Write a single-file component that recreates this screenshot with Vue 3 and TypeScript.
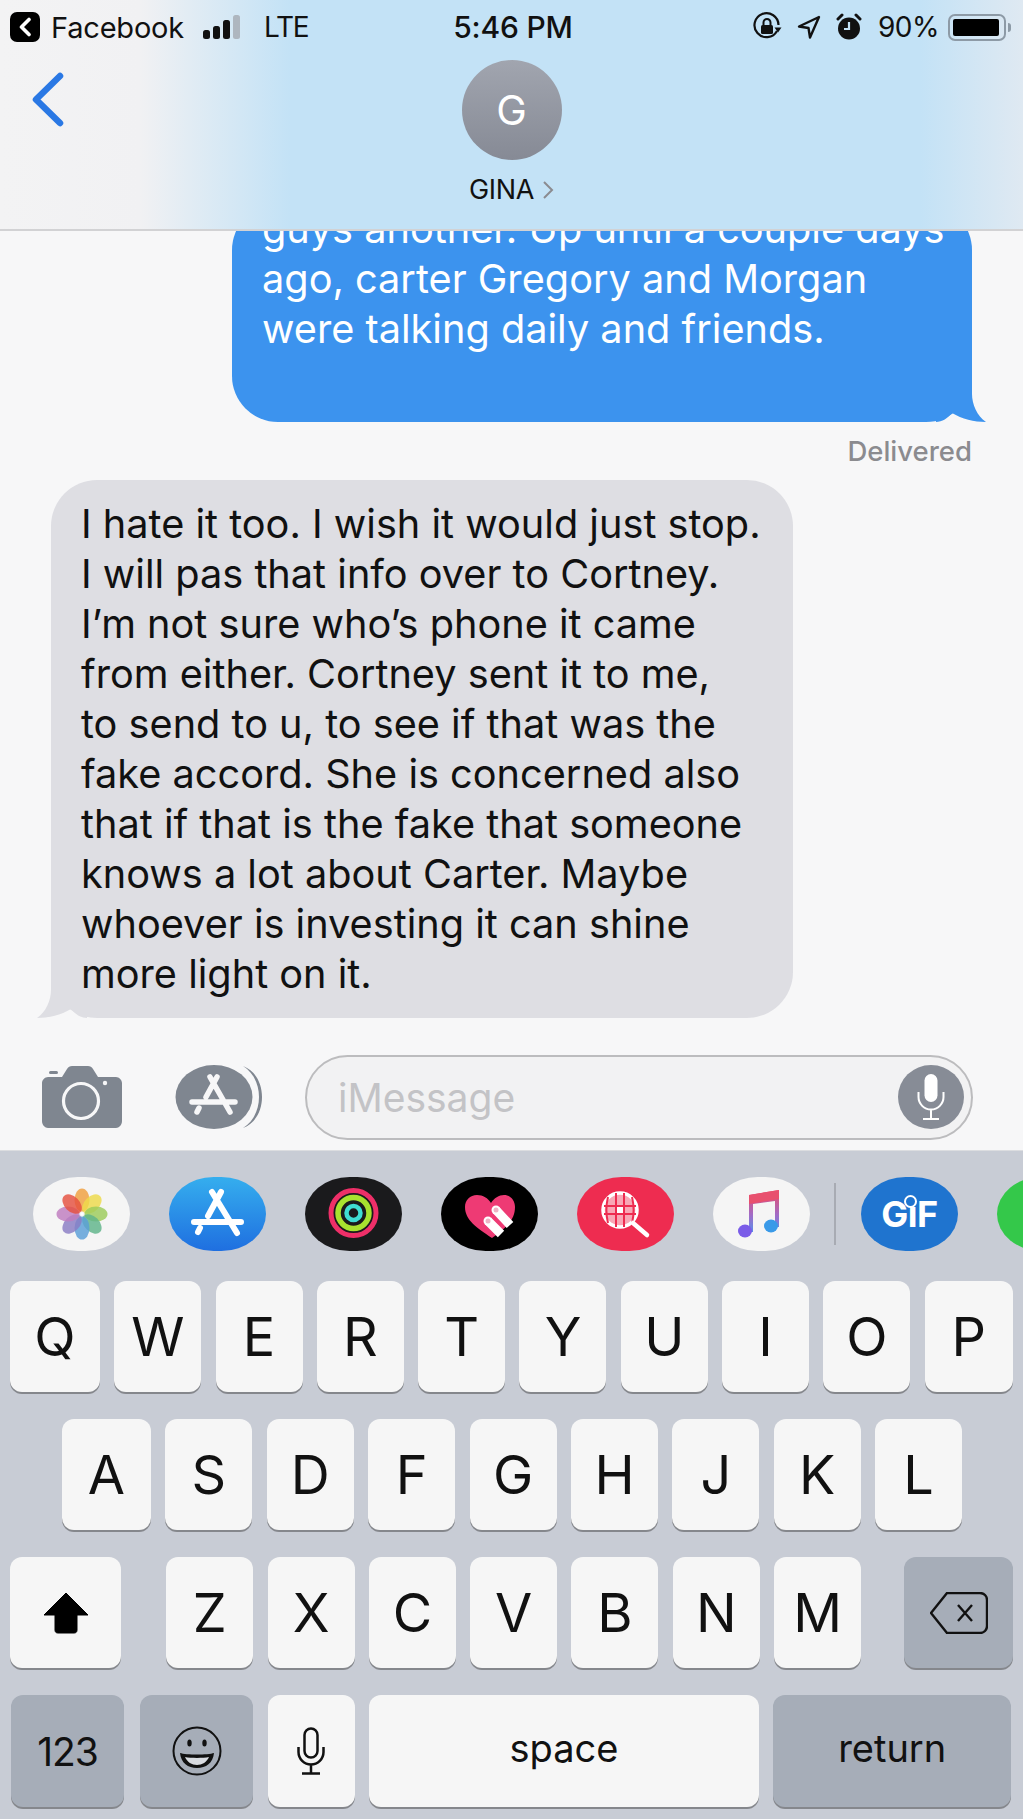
<template>
  <div class="phone">
    <header class="top">
      <div class="status">
        <div class="status-left">
          <span class="back-badge">
            <svg width="14" height="20" viewBox="0 0 14 20"><path d="M11 2.500 3.500 10l7.500 7.500" fill="none" stroke="#fff" stroke-width="3.600" stroke-linecap="round" stroke-linejoin="round" /></svg>
          </span>
          <span class="app-name">Facebook</span>
          <span class="signal"><i class="b1"></i><i class="b2"></i><i class="b3"></i><i class="b4"></i></span>
          <span class="lte">LTE</span>
        </div>
        <div class="clock">5:46 PM</div>
        <div class="status-right">
          <svg width="30" height="30" viewBox="0 0 30 30">
            <path d="M25 19a12 12 0 1 1 1.500-6" fill="none" stroke="#111" stroke-width="2.200" />
            <path d="M22.500 15.500h7l-3.500 5z" fill="#111" />
            <rect x="9" y="13" width="12" height="9" rx="1.500" fill="#111" />
            <path d="M11.500 13v-2.500a3.500 3.500 0 0 1 7 0V13" fill="none" stroke="#111" stroke-width="2" />
          </svg>
          <svg class="ic-loc" width="24" height="24" viewBox="0 0 24 24"><path d="M22 2 2 11.500l9.500 1.500 1.500 9.500z" fill="none" stroke="#111" stroke-width="2.400" stroke-linejoin="round" /></svg>
          <svg class="ic-alarm" width="26" height="28" viewBox="0 0 26 28">
            <circle cx="13" cy="15.500" r="11" fill="#111" />
            <path d="M13 9v7H8" fill="none" stroke="#c3e2f6" stroke-width="2.200" />
            <path d="M2 6l4-4M24 6l-4-4" stroke="#111" stroke-width="3" stroke-linecap="round" />
          </svg>
          <span class="pct">90%</span>
          <span class="battery"><i></i></span>
          <span class="nub"></span>
        </div>
      </div>
      <div class="contact">
        <svg class="nav-back" width="36" height="58" viewBox="0 0 36 58"><path d="M30 5 6 28.500 30 52" fill="none" stroke="#2a78e4" stroke-width="6.500" stroke-linecap="round" stroke-linejoin="round" /></svg>
        <div class="avatar">G</div>
        <div class="name">GINA <svg width="12" height="20" viewBox="0 0 12 20"><path d="M2 2l8 8-8 8" fill="none" stroke="#8b8b90" stroke-width="2" /></svg></div>
      </div>
    </header>

    <main class="messages">
      <div class="bubble sent">
        <svg class="tail tail-sent" width="50" height="50" viewBox="0 0 50 50"><path d="M36 0v22c0 10 5 22 14 28-12 0-24-3-34-9-4 5-10 9-16 9V0z" fill="#3c93ee" /></svg>
        <span class="text">{{ sentText }}</span>
      </div>
      <div class="delivered">Delivered</div>
      <div class="bubble received">
        <svg class="tail tail-received" width="50" height="50" viewBox="0 0 50 50"><path d="M36 0v22c0 10 5 22 14 28-12 0-24-3-34-9-4 5-10 9-16 9V0z" fill="#dedee3" /></svg>
        <span class="text">{{ receivedText }}</span>
      </div>
    </main>

    <section class="composer">
      <svg class="camera" width="80" height="62" viewBox="0 0 80 62">
        <path d="M6 11h14l5-8c1-2 3-3 5-3h16c2 0 4 1 5 3l5 8h18c3 0 6 3 6 6v38c0 4-3 7-6 7H6c-3 0-6-3-6-7V17c0-3 3-6 6-6z" fill="#7f8690" />
        <rect x="7" y="5" width="9" height="3" rx="1.500" fill="#7f8690" />
        <circle cx="39" cy="35" r="17.500" fill="none" stroke="#f7f7f8" stroke-width="3.200" />
        <circle cx="63" cy="17" r="2.200" fill="#f7f7f8" />
      </svg>
      <svg class="apps" width="88" height="66" viewBox="0 0 88 66">
        <path d="M68 2c10 6 16 18 16 31S78 58 68 64c13-5 19-18 19-31S81 7 68 2z" fill="#7f8690" />
        <ellipse cx="39" cy="33" rx="38.500" ry="32" fill="#7f8690" />
        <g stroke="#f7f7f8" stroke-width="5.500" stroke-linecap="round" fill="none">
          <path d="M42 13 31 33M24 44l-2 4M35 13l20 35M17 38h43" />
        </g>
      </svg>
      <div class="field">
        <span class="placeholder">iMessage</span>
        <span class="dictate">
          <svg width="30" height="48" viewBox="0 0 30 48">
            <rect x="8.500" y="1" width="13" height="28" rx="6.500" fill="#fff" />
            <path d="M2.500 19v5a12.500 12.500 0 0 0 25 0v-5M15 36.500V46M7 46h16" fill="none" stroke="#fff" stroke-width="2" />
          </svg>
        </span>
      </div>
    </section>

    <section class="keyboard">
      <div class="strip">
        <span class="pill light">
          <svg width="62" height="62" viewBox="0 0 62 62">
            <ellipse v-for="(c, i) in petals" :key="c" cx="31" cy="17" rx="7.500" ry="11.500" :fill="c" opacity="0.82" :transform="`rotate(${i * 45} 31 31)`" />
            <circle cx="31" cy="31" r="1.500" fill="#fff" />
          </svg>
        </span>
        <span class="pill store">
          <svg width="97" height="74" viewBox="0 0 97 74">
            <g stroke="#fff" stroke-width="6" stroke-linecap="round" fill="none">
              <path d="M52 15 39 39M31 51l-2 4M43 15l25 41M25 45h47" />
            </g>
          </svg>
        </span>
        <span class="pill rings">
          <svg width="97" height="74" viewBox="0 0 97 74" fill="none">
            <circle cx="48.500" cy="36" r="22.500" stroke="#ee2f68" stroke-width="5" />
            <circle cx="48.500" cy="36" r="15.500" stroke="#a8e22f" stroke-width="5.500" />
            <circle cx="48.500" cy="36" r="7" stroke="#3fdcd2" stroke-width="4.500" />
          </svg>
        </span>
        <span class="pill heart">
          <svg width="97" height="74" viewBox="0 0 97 74">
            <path d="M51 61C36 51 24 43 24 30c0-7 5-12 12-12 6 0 11 3 14 8 3-5 8-8 13-8 6 0 11 5 11 12 0 13-9 21-23 31z" fill="#ee3a74" />
            <path d="M47 44l13 13M55 33l14 15" stroke="#fff" stroke-width="9" />
            <circle cx="47" cy="44" r="4.500" fill="#fff" />
            <circle cx="55" cy="33" r="4.500" fill="#fff" />
            <circle cx="47" cy="44" r="2.500" fill="#eeb4c6" />
            <circle cx="55" cy="33" r="2.500" fill="#eeb4c6" />
          </svg>
        </span>
        <span class="pill search">
          <svg width="97" height="74" viewBox="0 0 97 74" fill="none">
            <circle cx="43" cy="33" r="17" fill="#f8a8b6" stroke="#fff" stroke-width="3.500" />
            <rect x="39" y="29" width="8" height="8" fill="#fff" />
            <path d="M39 16v34M47 16v34M31 20c-2 8-2 18 0 26M55 20c2 8 2 18 0 26M27 29h32M27 37h32" stroke="#ee2c50" stroke-width="2" />
            <path d="M56 46l14 12" stroke="#fff" stroke-width="4.500" stroke-linecap="round" />
          </svg>
        </span>
        <span class="pill light">
          <svg width="97" height="74" viewBox="0 0 97 74" fill="none">
            <defs>
              <linearGradient id="note" x1="0" y1="0" x2="0" y2="1"><stop offset="0" stop-color="#ec4a68" /><stop offset="0.6" stop-color="#a06cc8" /><stop offset="1" stop-color="#5a8ee8" /></linearGradient>
            </defs>
            <path d="M36 18l30-5v37h-4V24l-22 3v28h-4z" fill="url(#note)" />
            <path d="M36 18l30-5v9l-30 5z" fill="#e8506e" />
            <ellipse cx="32" cy="54" rx="7" ry="6.500" fill="#7a5ce8" />
            <ellipse cx="58" cy="49" rx="7" ry="6.500" fill="#3a9ae8" />
          </svg>
        </span>
        <span class="divider"></span>
        <span class="pill gif">GiF<i class="gif-ring"></i></span>
        <span class="pill green"></span>
      </div>

      <div class="rows">
        <div class="row row-top">
          <button v-for="k in rowOne" :key="k" class="key">{{ k }}</button>
        </div>
        <div class="row row-mid">
          <button v-for="k in rowTwo" :key="k" class="key">{{ k }}</button>
        </div>
        <div class="row row-low">
          <button class="key shift">
            <svg width="46" height="42" viewBox="0 0 46 42"><path d="M23 1 1 23h11v15c0 2 1 3 3 3h16c2 0 3-1 3-3V23h11z" fill="#000" stroke="#000" stroke-linejoin="round" /></svg>
          </button>
          <button v-for="k in rowThree" :key="k" class="key">{{ k }}</button>
          <button class="key dark erase">
            <svg width="58" height="42" viewBox="0 0 58 42" fill="none" stroke="#111" stroke-width="2.400">
              <path d="M17 1h33c4 0 7 3 7 7v26c0 4-3 7-7 7H17L1 21z" stroke-linejoin="round" />
              <path d="M28 13l14 16M42 13 28 29" />
            </svg>
          </button>
        </div>
        <div class="row row-bottom">
          <button class="key dark num">123</button>
          <button class="key dark emoji">
            <svg width="52" height="52" viewBox="0 0 52 52" fill="none">
              <circle cx="26" cy="26" r="23.500" stroke="#111" stroke-width="2" />
              <ellipse cx="18.500" cy="18" rx="2.200" ry="3.600" fill="#111" />
              <ellipse cx="33.500" cy="18" rx="2.200" ry="3.600" fill="#111" />
              <path d="M9 28c6 2 28 2 34 0-1 10-8 15-17 15S10 38 9 28z" fill="#111" />
              <path d="M14 32c6 1.200 18 1.200 24 0-2 5-7 8-12 8s-10-3-12-8z" fill="#d9dce1" />
            </svg>
          </button>
          <button class="key mic">
            <svg width="30" height="48" viewBox="0 0 30 48" fill="none" stroke="#111" stroke-width="2.500">
              <rect x="8.500" y="1.500" width="13" height="29" rx="6.500" />
              <path d="M2.500 20v5a12.500 12.500 0 0 0 25 0v-5M15 37.500V46M6 46.500h18" />
            </svg>
          </button>
          <button class="key space word">space</button>
          <button class="key dark return word">return</button>
        </div>
      </div>
    </section>
  </div>
</template>

<script setup lang="ts">
const sentText = 'guys another. Up until a couple days\nago, carter Gregory and Morgan\nwere talking daily and friends.'
const receivedText = [
  'I hate it too. I wish it would just stop.',
  'I will pas that info over to Cortney.',
  'I’m not sure who’s phone it came',
  'from either. Cortney sent it to me,',
  'to send to u, to see if that was the',
  'fake accord. She is concerned also',
  'that if that is the fake that someone',
  'knows a lot about Carter. Maybe',
  'whoever is investing it can shine',
  'more light on it.',
].join('\n')

const rowOne = ['Q', 'W', 'E', 'R', 'T', 'Y', 'U', 'I', 'O', 'P']
const rowTwo = ['A', 'S', 'D', 'F', 'G', 'H', 'J', 'K', 'L']
const rowThree = ['Z', 'X', 'C', 'V', 'B', 'N', 'M']
const petals = ['#f0a040', '#eedb4a', '#9ccc5a', '#5fb58a', '#5a9fd8', '#8a7cc4', '#c07cc0', '#e5503f']
</script>

<style>
html,
body {
  margin: 0;
  background: #f7f7f8;
}
</style>

<style scoped>
.phone {
  width: 1023px;
  height: 1819px;
  display: flex;
  flex-direction: column;
  overflow: hidden;
  font-family: Inter, "Liberation Sans", sans-serif;
  color: #111;
  background: #f7f7f8;
}

/* header */
.top {
  flex: 0 0 231px;
  position: relative;
  z-index: 1;
  box-sizing: border-box;
  border-bottom: 2px solid #d2d2d4;
  background: linear-gradient(90deg, #f3f3f4 0, #f1f1f3 140px, #c3e2f6 290px, #c3e2f6 920px, #dfe9f2 1023px);
}
.status {
  display: grid;
  grid-template-columns: 1fr auto 1fr;
  align-items: center;
  height: 54px;
}
.status-left {
  display: flex;
  align-items: center;
  padding-left: 10px;
}
.back-badge {
  width: 30px;
  height: 30px;
  border-radius: 7px;
  background: #000;
  display: flex;
  align-items: center;
  justify-content: center;
}
.app-name {
  margin-left: 11px;
  font-size: 29px;
  letter-spacing: -0.2px;
}
.signal {
  display: flex;
  align-items: flex-end;
  gap: 3px;
  height: 24px;
  margin-left: 19px;
}
.signal i {
  width: 7px;
  border-radius: 2.5px;
  background: #111;
}
.signal .b1 { height: 9px; }
.signal .b2 { height: 13px; }
.signal .b3 { height: 19px; }
.signal .b4 { height: 24px; background: #aeb6bf; }
.lte {
  margin-left: 24px;
  font-size: 28px;
  letter-spacing: -1.2px;
}
.clock {
  padding-left: 3px;
  font-size: 30px;
  font-weight: 500;
  letter-spacing: -0.2px;
}
.status-right {
  display: flex;
  align-items: center;
  justify-content: flex-end;
  padding-right: 12px;
}
.ic-loc { margin-left: 15px; }
.ic-alarm { margin-left: 15px; }
.pct {
  margin-left: 16px;
  font-size: 28px;
  letter-spacing: -0.5px;
}
.battery {
  margin-left: 9px;
  box-sizing: border-box;
  width: 58px;
  height: 27px;
  border: 2px solid #8d9aa6;
  border-radius: 7px;
  padding: 3px;
  display: flex;
}
.battery i {
  width: 46px;
  background: #000;
  border-radius: 2px;
}
.nub {
  margin-left: 2px;
  width: 3px;
  height: 9px;
  border-radius: 0 3px 3px 0;
  background: #8d9aa6;
}
.contact {
  position: relative;
  display: flex;
  flex-direction: column;
  align-items: center;
  padding-top: 6px;
}
.nav-back {
  position: absolute;
  left: 30px;
  top: 17px;
}
.avatar {
  width: 100px;
  height: 100px;
  border-radius: 50%;
  background: linear-gradient(180deg, #a1a5af, #868a95);
  color: #fff;
  font-size: 41px;
  display: flex;
  align-items: center;
  justify-content: center;
}
.name {
  margin-top: 14px;
  font-size: 27px;
  line-height: 32px;
  display: flex;
  align-items: center;
  gap: 8px;
  letter-spacing: -0.4px;
}

/* messages */
.messages {
  flex: 1;
  min-height: 0;
  display: flex;
  flex-direction: column;
  justify-content: flex-end;
  overflow: hidden;
  padding-bottom: 26px;
}
.bubble {
  position: relative;
  flex: none;
  box-sizing: border-box;
  border-radius: 46px;
  font-size: 39.7px;
  line-height: 50px;
  white-space: pre;
}
.text {
  position: relative;
}
.sent {
  align-self: flex-end;
  width: 740px;
  margin-right: 51px;
  padding: 0 30px 68px;
  color: #fff;
  background: #3c93ee;
}
.received {
  align-self: flex-start;
  width: 742px;
  margin-left: 51px;
  padding: 19px 30px;
  color: #111;
  background: #dedee3;
}
.tail {
  position: absolute;
  bottom: 0;
}
.tail-sent { right: -14px; }
.tail-received {
  left: -14px;
  transform: scaleX(-1);
}
.delivered {
  align-self: flex-end;
  margin: 14px 51px 14px 0;
  font-size: 27.5px;
  line-height: 30px;
  font-weight: 500;
  color: #8b8b8f;
}

/* composer */
.composer {
  flex: 0 0 106px;
  display: flex;
  align-items: center;
  padding-left: 42px;
  padding-right: 50px;
  box-sizing: border-box;
}
.apps { margin-left: 53px; }
.field {
  flex: 1;
  margin-left: 42px;
  height: 85px;
  box-sizing: border-box;
  border: 2px solid #bcbcbe;
  border-radius: 43px;
  background: #f2f2f3;
  display: flex;
  align-items: center;
  justify-content: space-between;
  padding: 0 7px 0 31px;
}
.placeholder {
  font-size: 39px;
  color: #c3c3c6;
}
.dictate {
  width: 66px;
  height: 64px;
  border-radius: 50%;
  background: #878c96;
  display: flex;
  align-items: center;
  justify-content: center;
}

/* keyboard */
.keyboard {
  flex: 0 0 669px;
  box-sizing: border-box;
  border-top: 1px solid #dcdde0;
  background: #c8ccd5;
}
.strip {
  display: flex;
  align-items: center;
  gap: 39px;
  padding: 26px 0 0 33px;
  width: 1023px;
  box-sizing: border-box;
  overflow: hidden;
}
.pill {
  flex: 0 0 97px;
  height: 74px;
  border-radius: 46% / 50%;
  display: flex;
  align-items: center;
  justify-content: center;
}
.light { background: #f5f5f5; }
.store { background: linear-gradient(180deg, #35aeee, #1f6fe0); }
.rings { background: #1a1a1c; }
.heart { background: #000; }
.search { background: #ee2c50; }
.divider {
  flex: 0 0 2px;
  height: 62px;
  margin: 0 -14px 0 -15px;
  background: #a8abb3;
}
.gif {
  position: relative;
  background: #1f74cf;
  color: #fff;
  font-size: 36px;
  font-weight: 700;
  letter-spacing: -0.5px;
}
.gif-ring {
  position: absolute;
  left: 43px;
  top: 18px;
  width: 9px;
  height: 9px;
  border: 2.5px solid #fff;
  border-radius: 50%;
  background: #1f74cf;
}
.green { background: #34c84a; }

.rows {
  display: flex;
  flex-direction: column;
  gap: 27px;
  margin-top: 30px;
}
.row {
  display: flex;
  gap: 14.3px;
  height: 111px;
}
.row-top { padding-left: 10px; }
.row-mid {
  padding-left: 62px;
  gap: 14.4px;
}
.row-low { padding-left: 10px; }
.row-bottom {
  height: 112px;
  padding-left: 11px;
}
.key {
  flex: 0 0 87px;
  padding: 0;
  border: none;
  border-radius: 12px;
  background: #f6f6f6;
  box-shadow: 0 2px 0 #85878c;
  font-family: inherit;
  font-size: 54px;
  color: #111;
  display: flex;
  align-items: center;
  justify-content: center;
}
.row-top .key:first-child { flex-basis: 90px; }
.row-top .key:last-child { flex-basis: 88px; }
.row-mid .key:first-child { flex-basis: 89px; }
.dark { background: #a6adb8; }
.shift {
  flex-basis: 111px;
  margin-right: 31px;
}
.erase {
  flex-basis: 109px;
  margin-left: 29px;
}
.num {
  flex-basis: 113px;
  font-size: 39px;
  letter-spacing: -1px;
}
.emoji {
  flex-basis: 113px;
  margin-left: 2px;
}
.space { flex-basis: 390px; }
.return { flex-basis: 238px; }
.word {
  font-size: 38px;
  padding-bottom: 6px;
}
</style>
